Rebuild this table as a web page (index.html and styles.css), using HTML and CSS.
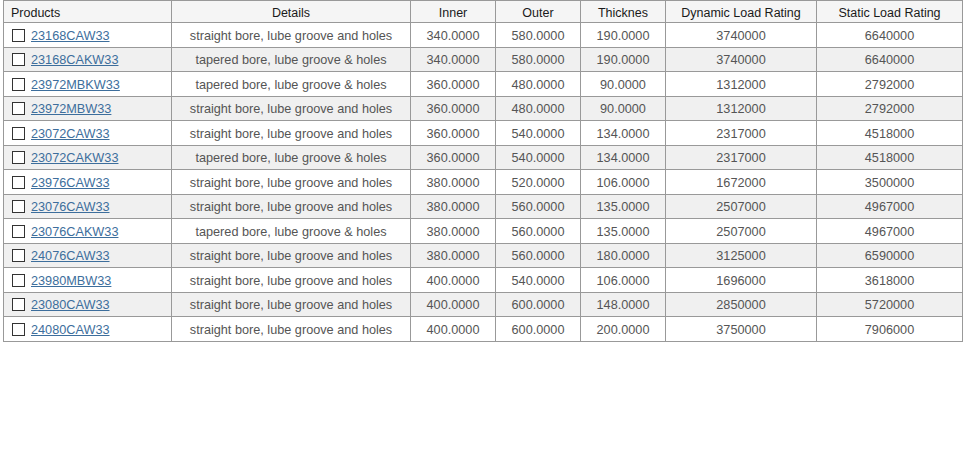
FILE: index.html
```html
<!DOCTYPE html>
<html>
<head>
<meta charset="utf-8">
<link rel="stylesheet" href="styles.css">
</head>
<body>
<table class="grid">
<colgroup>
<col class="c-prod"><col class="c-det"><col class="c-num"><col class="c-num"><col class="c-num"><col class="c-dyn"><col class="c-stat">
</colgroup>
<thead>
<tr><th class="left">Products</th><th>Details</th><th>Inner</th><th>Outer</th><th>Thicknes</th><th>Dynamic Load Rating</th><th>Static Load Rating</th></tr>
</thead>
<tbody>
<tr><td class="left"><span class="box"></span><a href="#">23168CAW33</a></td><td>straight bore, lube groove and holes</td><td>340.0000</td><td>580.0000</td><td>190.0000</td><td>3740000</td><td>6640000</td></tr>
<tr class="alt"><td class="left"><span class="box"></span><a href="#">23168CAKW33</a></td><td>tapered bore, lube groove &amp; holes</td><td>340.0000</td><td>580.0000</td><td>190.0000</td><td>3740000</td><td>6640000</td></tr>
<tr><td class="left"><span class="box"></span><a href="#">23972MBKW33</a></td><td>tapered bore, lube groove &amp; holes</td><td>360.0000</td><td>480.0000</td><td>90.0000</td><td>1312000</td><td>2792000</td></tr>
<tr class="alt"><td class="left"><span class="box"></span><a href="#">23972MBW33</a></td><td>straight bore, lube groove and holes</td><td>360.0000</td><td>480.0000</td><td>90.0000</td><td>1312000</td><td>2792000</td></tr>
<tr><td class="left"><span class="box"></span><a href="#">23072CAW33</a></td><td>straight bore, lube groove and holes</td><td>360.0000</td><td>540.0000</td><td>134.0000</td><td>2317000</td><td>4518000</td></tr>
<tr class="alt"><td class="left"><span class="box"></span><a href="#">23072CAKW33</a></td><td>tapered bore, lube groove &amp; holes</td><td>360.0000</td><td>540.0000</td><td>134.0000</td><td>2317000</td><td>4518000</td></tr>
<tr><td class="left"><span class="box"></span><a href="#">23976CAW33</a></td><td>straight bore, lube groove and holes</td><td>380.0000</td><td>520.0000</td><td>106.0000</td><td>1672000</td><td>3500000</td></tr>
<tr class="alt"><td class="left"><span class="box"></span><a href="#">23076CAW33</a></td><td>straight bore, lube groove and holes</td><td>380.0000</td><td>560.0000</td><td>135.0000</td><td>2507000</td><td>4967000</td></tr>
<tr><td class="left"><span class="box"></span><a href="#">23076CAKW33</a></td><td>tapered bore, lube groove &amp; holes</td><td>380.0000</td><td>560.0000</td><td>135.0000</td><td>2507000</td><td>4967000</td></tr>
<tr class="alt"><td class="left"><span class="box"></span><a href="#">24076CAW33</a></td><td>straight bore, lube groove and holes</td><td>380.0000</td><td>560.0000</td><td>180.0000</td><td>3125000</td><td>6590000</td></tr>
<tr><td class="left"><span class="box"></span><a href="#">23980MBW33</a></td><td>straight bore, lube groove and holes</td><td>400.0000</td><td>540.0000</td><td>106.0000</td><td>1696000</td><td>3618000</td></tr>
<tr class="alt"><td class="left"><span class="box"></span><a href="#">23080CAW33</a></td><td>straight bore, lube groove and holes</td><td>400.0000</td><td>600.0000</td><td>148.0000</td><td>2850000</td><td>5720000</td></tr>
<tr><td class="left"><span class="box"></span><a href="#">24080CAW33</a></td><td>straight bore, lube groove and holes</td><td>400.0000</td><td>600.0000</td><td>200.0000</td><td>3750000</td><td>7906000</td></tr>
</tbody>
</table>
</body>
</html>
```
FILE: styles.css
```css
html, body {
  margin: 0;
  padding: 0;
  background: #fff;
}
body {
  padding: 0 3px;
  font-family: "Liberation Sans", Arial, sans-serif;
  font-size: 12.7px;
  line-height: 14px;
  color: #555;
}
.grid {
  border-collapse: collapse;
  table-layout: fixed;
  width: 960px;
}
.c-prod { width: 168px; }
.c-det { width: 239px; }
.c-num { width: 85px; }
.c-dyn { width: 151px; }
.c-stat { width: 146px; }
.grid th, .grid td {
  border: 1px solid #999;
  text-align: center;
  white-space: nowrap;
  overflow: hidden;
  box-sizing: border-box;
}
.grid th {
  height: 22px;
  padding: 5px 0 0;
  vertical-align: top;
  background: #f5f5f5;
  color: #1a1a1a;
  font-weight: normal;
  font-size: 12.5px;
  line-height: 14px;
}
.grid td {
  height: 24.5px;
  padding: 2px 0 0;
  vertical-align: middle;
}
.grid .left {
  text-align: left;
  padding-left: 7px;
}
.grid tr.alt td {
  background: #f0f0f0;
}
.box {
  display: inline-block;
  width: 11px;
  height: 11px;
  border: 1px solid #333;
  background: #fff;
  vertical-align: -2px;
  margin-left: 1px;
  margin-right: 6px;
}
a {
  color: #3d6e9c;
  text-decoration: underline;
}
```
